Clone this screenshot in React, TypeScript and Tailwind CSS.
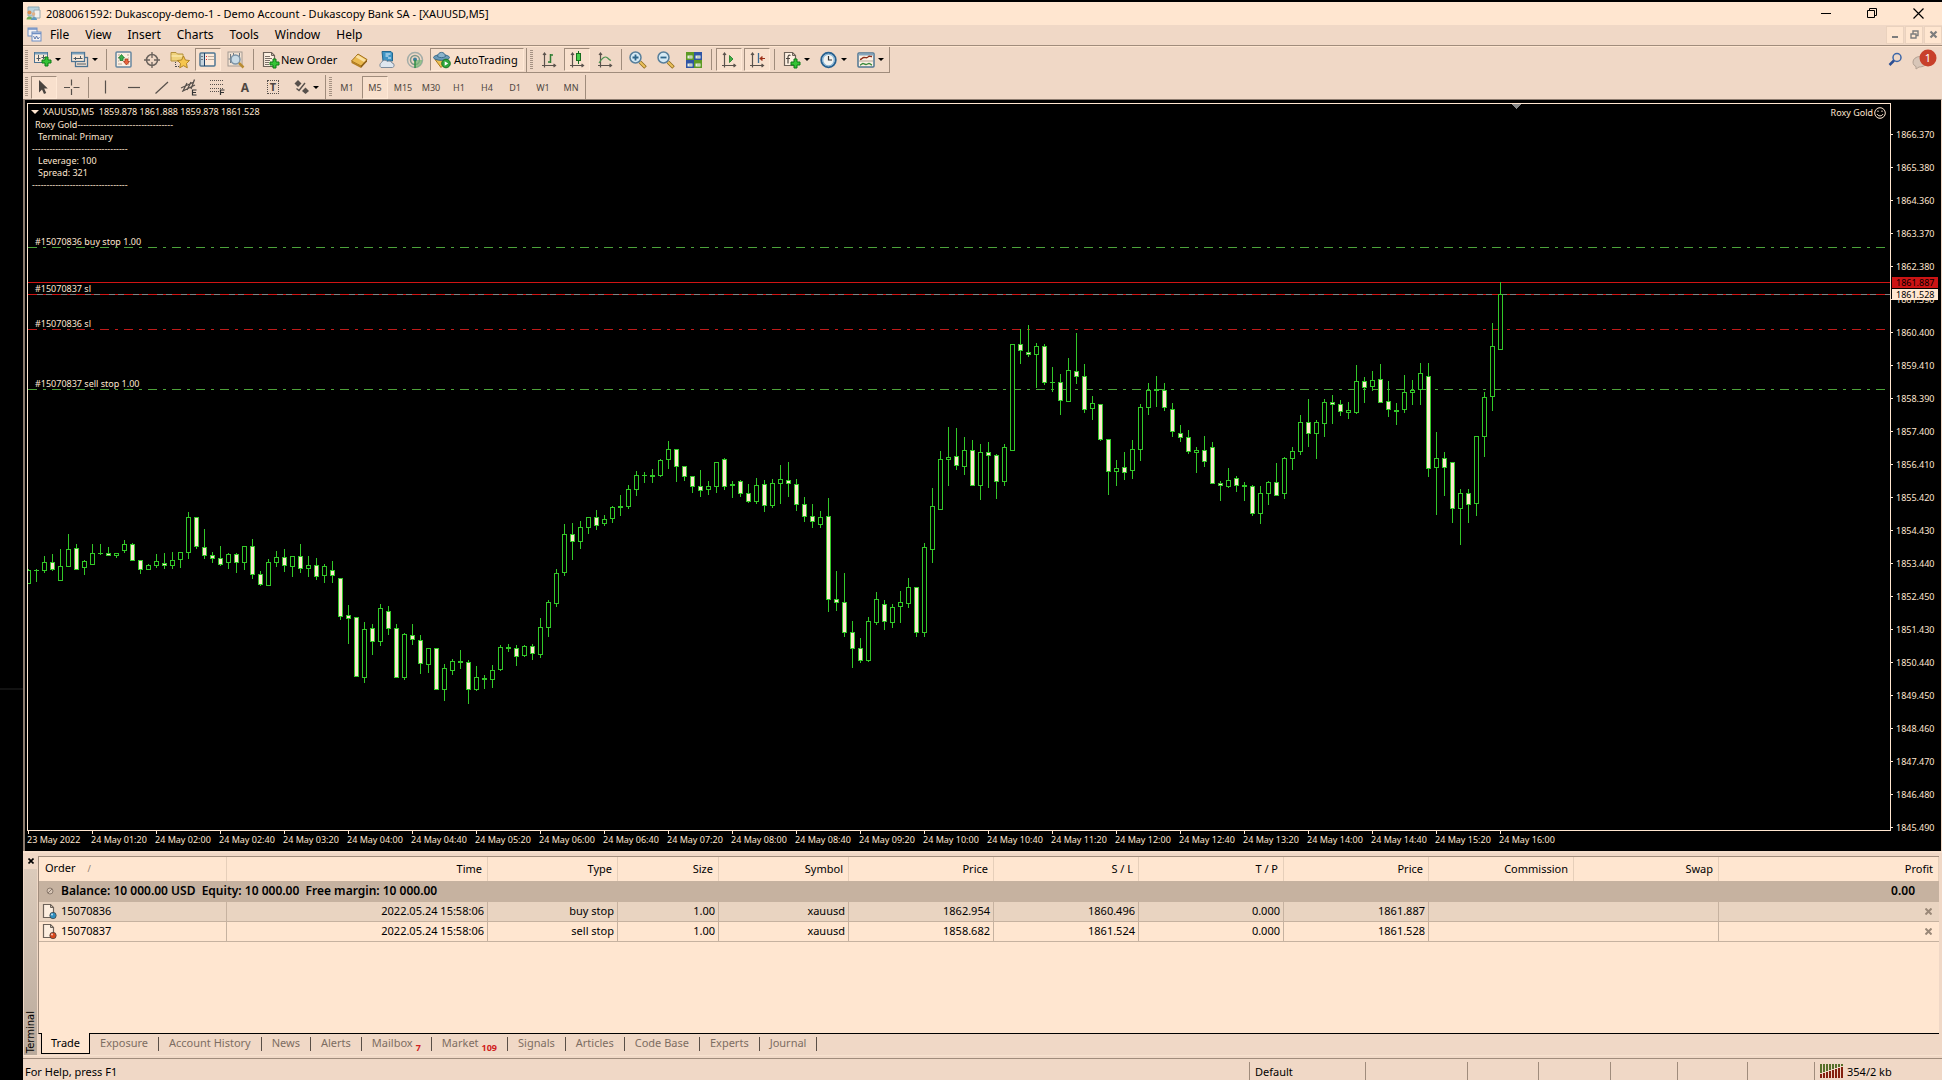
import React from "react";

function Svg({ children, size = 18 }: { children: React.ReactNode; size?: number }) {
  return (
    <svg width={size} height={size} viewBox={`0 0 ${size} ${size}`} fill="none" className="shrink-0" aria-hidden="true">
      {children}
    </svg>
  );
}

function Plus({ x, y }: { x: number; y: number }) {
  return <path d={`M${x + 3} ${y}h3v3h3v3h-3v3h-3v-3h-3v-3h3z`} fill="#35c435" stroke="#0d7a17" />;
}

const NewChartIcon = () => (
  <Svg>
    <rect x="0.5" y="1.5" width="13" height="10" fill="#fbe9d8" stroke="#4d7391" />
    <path d="M1 2.5h12" stroke="#7ba0bb" strokeWidth="2" />
    <path d="M4.500 4v6M2.500 7.500h4M9.500 4v4M7.500 6.500h4" stroke="#4c5a64" />
    <Plus x={8} y={6} />
  </Svg>
);
const ProfilesIcon = () => (
  <Svg>
    <rect x="4.500" y="6.500" width="12" height="9" fill="#f8e4d3" stroke="#4d7391" strokeWidth="1.300" />
    <rect x="0.5" y="1.500" width="13" height="9" fill="#fbe9d8" stroke="#4d7391" strokeWidth="1.300" />
    <path d="M1 2.500h12" stroke="#7ba0bb" strokeWidth="2" />
    <path d="M2.500 7.500h9M4.500 6v3M9.500 5v3M6 13h9" stroke="#4c5a64" />
  </Svg>
);
const MarketWatchIcon = () => (
  <Svg>
    <rect x="1" y="1" width="15" height="15" rx="1" fill="#fdf0e2" stroke="#6787a0" strokeWidth="1.500" />
    <path d="M3 4h2M3 7h1M3 10h1M3 13h4M12 4h2M13 7h1M13 13h1" stroke="#b8a596" />
    <path d="M6.500 3.500l3 3.500h-1.500v2.500H5V7H3.500z" fill="#3cae4b" stroke="#1d7a2c" strokeWidth="0.8" />
    <path d="M11.500 14l3-3.500H13V8h-3v2.500H8.500z" fill="#e8643c" stroke="#a63a1c" strokeWidth="0.8" />
  </Svg>
);
const DataWindowIcon = () => (
  <Svg>
    <circle cx="9" cy="9" r="5.500" stroke="#6a625c" strokeWidth="1.500" />
    <path d="M9 1v6M9 11v6M1 9h6M11 9h6" stroke="#6a625c" strokeWidth="1.300" />
  </Svg>
);
const NavigatorIcon = () => (
  <Svg size={20}>
    <path d="M1 2.500h5l1.500 1.500H13v7H1z" fill="#f0d27c" stroke="#b3903c" />
    <path d="M1.500 6h11" stroke="#fff0bd" />
    <path d="M5.500 12v5M6 16.500h4" stroke="#4c4c4c" strokeDasharray="1 1" />
    <path d="M13.500 6l1.900 4 4.100.5-3 3 .8 4.300-3.800-2.100-3.800 2.100.8-4.300-3-3 4.100-.5z" fill="#f6c64f" stroke="#a97c1e" strokeWidth="0.9" />
  </Svg>
);
const TerminalIcon = () => (
  <Svg>
    <rect x="1" y="2" width="15" height="13" rx="1" fill="#fdeada" stroke="#4f7592" strokeWidth="1.500" />
    <path d="M2 3h3v11H2z" fill="#c4d3dd" />
    <path d="M5.500 2v13" stroke="#1d3f66" />
    <path d="M3 5v1M3 8v1" stroke="#222" />
    <path d="M7 5.500h1M7 8.500h1" stroke="#d23" />
    <path d="M9 5.500h6M9 8.500h6" stroke="#b9a99b" />
  </Svg>
);
const TesterIcon = () => (
  <Svg>
    <rect x="1" y="1" width="14" height="14" fill="#f3e2d2" stroke="#a49a92" />
    <path d="M3.500 3v9M1.500 8h3M6.500 2v5M12.500 2v4" stroke="#6f7880" />
    <circle cx="8.500" cy="8.500" r="4.500" fill="#c9dbe6" stroke="#7b93a6" strokeWidth="1.500" />
    <path d="M12 12l4.500 4.500" stroke="#b98c33" strokeWidth="2.500" />
  </Svg>
);
const NewOrderIcon = () => (
  <Svg>
    <path d="M1.500 1.500h8l3 3v11h-11z" fill="#fdf0e2" stroke="#6d6259" strokeWidth="1.200" />
    <path d="M9.500 1.500v3h3" stroke="#6d6259" />
    <path d="M3 5.500h5M3 7.500h7M3 9.500h5M3 11.500h4M3 13.500h4" stroke="#7a7068" />
    <Plus x={8} y={8} />
  </Svg>
);
const MetaEditorIcon = () => (
  <Svg>
    <path d="M1.500 10L8 3l9 5.500-6 6.500z" fill="#eab950" stroke="#a2701a" />
    <path d="M8 4l8 5-2 2-8.500-5z" fill="#fbe0a0" />
    <path d="M1.500 10l9.500 5v2l-9.500-5z" fill="#b57f22" />
    <path d="M11 15l6-6.500v2L11 17z" fill="#8c5d14" />
  </Svg>
);
const VpsIcon = () => (
  <Svg>
    <path d="M4 .500h9l1.500 1.500v8H5z" fill="#3f94c4" stroke="#24688f" />
    <path d="M7.500 3h5M7.500 5h3M10 7h3" stroke="#e8f6ff" strokeWidth="1.200" />
    <path d="M3 16.500a3 3 0 01.5-5 3.500 3.500 0 016-1 3 3 0 014.500 1.500 2.300 2.300 0 01.5 4.500z" fill="#dfe6ee" stroke="#7d8b9b" />
  </Svg>
);
const SignalIcon = () => (
  <Svg>
    <circle cx="9" cy="9" r="7.500" stroke="#a3ada8" strokeWidth="1.500" />
    <circle cx="9" cy="9" r="4.500" stroke="#7f988b" strokeWidth="1.500" />
    <path d="M9 9v8c4-.5 7-3.500 7.500-8z" fill="#74b775" opacity="0.7" />
    <circle cx="9" cy="8.500" r="2" fill="#3d7f9b" />
    <path d="M9 9v8" stroke="#2f8f45" strokeWidth="1.500" />
  </Svg>
);
const AutoTradingIcon = () => (
  <Svg>
    <path d="M2 8.500l6 8 7-7z" fill="#efc052" stroke="#a8791d" />
    <ellipse cx="8.500" cy="6.500" rx="8" ry="2.800" fill="#6c9bb8" stroke="#3d6d8c" />
    <path d="M4.500 5.500C5 0 12 0 12.500 5.500c-2 1.500-6 1.500-8 0z" fill="#8bb4cc" stroke="#3d6d8c" />
    <circle cx="13" cy="12.500" r="4.300" fill="#2fa63c" stroke="#177522" />
    <path d="M11.700 10.200l3.500 2.300-3.500 2.300z" fill="#fff" />
  </Svg>
);
function Axes() {
  return (
    <path d="M4.500 2v14.500M2 14.500h13.500M3 4l1.500-2L6 4M13.500 13l2 1.500-2 1.500" stroke="#5a524c" strokeWidth="1.200" />
  );
}
const BarChartIcon = () => (
  <Svg>
    <Axes />
    <path d="M10.500 3v9M10.500 4h2.500M8 11h2.500" stroke="#2e7d33" strokeWidth="1.500" />
  </Svg>
);
const CandleIcon = () => (
  <Svg>
    <Axes />
    <path d="M10.500 0v13" stroke="#176d1d" />
    <rect x="8.500" y="2.500" width="4" height="7" fill="#45cf4a" stroke="#176d1d" />
  </Svg>
);
const LineChartIcon = () => (
  <Svg>
    <Axes />
    <path d="M3 12c3-5 6-7 8-5.500 1.500 1 2 2.500 4 3" stroke="#4c9350" strokeWidth="1.200" />
  </Svg>
);
function Zoom({ plus }: { plus?: boolean }) {
  return (
    <Svg>
      <path d="M11 11l5.500 5.500" stroke="#8f6a1c" strokeWidth="3.500" />
      <path d="M11 11l5 5" stroke="#ebc15c" strokeWidth="2" />
      <circle cx="6.500" cy="6.500" r="5.500" fill="#d6eaf4" stroke="#587f9b" strokeWidth="1.500" />
      <path d={plus ? "M3.500 6.500h6M6.500 3.500v6" : "M3.500 6.500h6"} stroke="#2f678c" strokeWidth="1.800" />
    </Svg>
  );
}
const TileIcon = () => (
  <Svg>
    <path d="M1 1h8v8H1zM9 9h8v8H9z" fill="#5d9a25" />
    <path d="M9 1h8v8H9zM1 9h8v8H1z" fill="#2f55a4" />
    <path d="M2.500 4.500h5v3h-5zM10.500 4.500h5v3h-5zM2.500 12.500h5v3h-5zM10.500 12.500h5v3h-5z" fill="#e9f0e4" />
    <path d="M4 6h3M12 6h3M4 14h3M12 14h3" stroke="#9fb09a" />
  </Svg>
);
const AutoScrollIcon = () => (
  <Svg>
    <Axes />
    <path d="M9.500 4.500l3.500 3.500-3.500 3.500z" fill="#3fae45" stroke="#1c7a24" strokeWidth="0.8" />
  </Svg>
);
const ShiftIcon = () => (
  <Svg>
    <Axes />
    <path d="M10.500 2v10" stroke="#3b6c94" strokeWidth="1.300" />
    <path d="M12 7.500h5M14 5.500l-2 2 2 2z" stroke="#9c2f17" fill="#9c2f17" />
  </Svg>
);
const IndicatorsIcon = () => (
  <Svg>
    <path d="M1.500 1.500h8l3 3v10h-11z" fill="#fdf0e2" stroke="#6d6259" strokeWidth="1.200" />
    <path d="M9.500 1.500v3h3" stroke="#6d6259" />
    <path d="M7.500 4.500c-2-1-2.500.5-2.500 2v6M3 7.500h4" stroke="#4d4640" strokeWidth="1.200" />
    <Plus x={8} y={8} />
  </Svg>
);
const ClockIcon = () => (
  <Svg>
    <circle cx="8.500" cy="9" r="7.200" fill="#f3f3f0" stroke="#27608f" strokeWidth="2" />
    <circle cx="8.500" cy="9" r="5.800" stroke="#86b3d4" strokeWidth="1.300" />
    <path d="M8.500 5v4H12" stroke="#333" strokeWidth="1.200" />
  </Svg>
);
const TemplateIcon = () => (
  <Svg>
    <rect x="1" y="2" width="16" height="14" rx="1" fill="#fdf0e2" stroke="#4f7592" strokeWidth="1.500" />
    <path d="M1.500 3.500h15" stroke="#86a7be" strokeWidth="2" />
    <path d="M3 8.500c2 0 2-2 4-2s3 1 4-.5 2-.5 4-.5" stroke="#8c2f1b" strokeWidth="1.300" />
    <path d="M2 10h14" stroke="#b7a799" />
    <path d="M3 14c1 0 2-1.500 3-1.500s1.500 1 3 1 1.500-1 3-1 1 1 3 1.500" stroke="#3c8a3f" strokeWidth="1.300" />
  </Svg>
);

const CursorIcon = () => (
  <Svg>
    <path d="M4 2v12.500l3-3 2 4.500 2.200-1L9.200 10.500h3.600z" fill="#4a443f" />
  </Svg>
);
const CrosshairIcon = () => (
  <Svg>
    <path d="M8.500 1.500v6M8.500 11v6M1 9.500h6M10.500 9.500h6" stroke="#57504b" strokeWidth="1.200" />
  </Svg>
);
const VLineIcon = () => (
  <Svg>
    <path d="M9.500 2.500v13" stroke="#57504b" strokeWidth="1.200" />
  </Svg>
);
const HLineIcon = () => (
  <Svg>
    <path d="M4 9.500h12" stroke="#57504b" strokeWidth="1.200" />
  </Svg>
);
const TrendIcon = () => (
  <Svg>
    <path d="M3.500 15.500L16 4" stroke="#57504b" strokeWidth="1.200" />
  </Svg>
);
const ChannelIcon = () => (
  <Svg>
    <path d="M1 10L14 4M2 13.500L15 7M3 13L7 5M7 12l4-8M11 11l3.500-9.500" stroke="#57504b" strokeWidth="1.300" />
    <path d="M16.500 12h-4v5h4M12.500 14.500h3.500" stroke="#333" strokeWidth="1.200" />
  </Svg>
);
const FiboIcon = () => (
  <Svg>
    <path d="M2 2.500h14M2 6.500h14M2 10.500h14M2 13.500h9" stroke="#57504b" strokeDasharray="1 1" strokeWidth="1.200" />
    <path d="M16.500 12h-4v5M12.500 14.500h3.500" stroke="#333" strokeWidth="1.200" />
  </Svg>
);
const ArrowsIcon = () => (
  <Svg>
    <path d="M6 2l3.500 3.500L6 9 2.500 5.500z" fill="#57504b" />
    <path d="M13.500 9.500L17 13l-3.500 3L10 13z" fill="#57504b" />
    <path d="M4.500 10.500l2.500 2L13 5" stroke="#57504b" strokeWidth="1.400" />
  </Svg>
);
const AppIcon = () => (
  <Svg size={15}>
    <path d="M2 1h11v9H2z" fill="#b9d3dd" stroke="#8aa9b5" />
    <path d="M8 4h6v8H8z" fill="#f2f0ec" stroke="#9aa8ae" />
    <circle cx="3.500" cy="6.500" r="2" fill="#d98c4f" />
    <path d="M.5 13.500c0-4 6-4 6 0z" fill="#6fae52" />
    <circle cx="7.500" cy="8" r="1.800" fill="#e0b28a" />
    <path d="M5 14c0-4 6-4 6 0z" fill="#5d9ac0" />
  </Svg>
);
const MdiIcon = () => (
  <Svg size={15}>
    <rect x="1" y="1" width="9" height="8" fill="#f5f2f3" stroke="#6f8fc4" />
    <rect x="5" y="5" width="9" height="9" fill="#f5f2f3" stroke="#6f8fc4" />
    <path d="M1 2h9M5 6.500h9" stroke="#6f8fc4" strokeWidth="1.500" />
    <path d="M6.500 9l1.500 3 1.500-3 1.500 3 1.500-2" stroke="#4f6fa8" strokeWidth="0.9" />
  </Svg>
);

function Grip() {
  return <span className="h-5 w-[3px] shrink-0 bg-[repeating-linear-gradient(to_bottom,#a59283_0_1px,transparent_1px_2px)]" />;
}
function Sep({ tight }: { tight?: boolean }) {
  return <span className={tight ? "mx-[2px] h-[21px] w-px shrink-0 bg-[#a08c7c]" : "mx-[3px] h-[21px] w-px shrink-0 bg-[#a08c7c]"} />;
}
function Caret() {
  return <span className="h-0 w-0 border-x-[3px] border-t-[3px] border-x-transparent border-t-black" />;
}

function ToolButton({ label, pressed, children }: { label: string; pressed?: boolean; children: React.ReactNode }) {
  return (
    <span className="flex w-7 shrink-0 justify-center">
      <button
        type="button"
        aria-label={label}
        aria-pressed={pressed}
        className={
          pressed
            ? "flex h-[23px] w-[26px] items-center justify-center border border-t-[#a08c7c] border-r-[#ffe9d6] border-b-[#ffe9d6] border-l-[#a08c7c] bg-[#f8e0cd]"
            : "flex h-[23px] w-[26px] items-center justify-center"
        }
      >
        {children}
      </button>
    </span>
  );
}
function DropButton({ label, children }: { label: string; children: React.ReactNode }) {
  return (
    <button type="button" aria-label={label} className="flex h-[23px] w-[37px] shrink-0 items-center gap-[3px] pl-[5px]">
      {children}
      <Caret />
    </button>
  );
}

/* Candle rows: high, body top, body bottom, low (three units per pixel) and f = filled, h = hollow. */
const SEGMENTS: { base: number; rows: string }[] = [
  {
    base: 116,
    rows:
      "1047 1050 1092 1092 h,1047 1050 1053 1086 h,1008 1026 1053 1059 h,1002 1026 1050 1053 f,987 1038 1083 1083 h,942 987 1041 1041 h,972 984 1050 1050 f,1020 1023 1044 1065 h,972 999 1035 1035 h,972 999 1002 1005 h,981 999 1008 1008 f,999 999 1008 1014 h,960 972 993 999 h,969 972 1023 1023 f,1020 1020 1050 1062 f,1032 1035 1050 1050 h,1002 1023 1038 1044 h,999 1029 1038 1047 f,996 1020 1038 1047 h,996 996 1020 1044 h,876 891 999 1017 h,891 891 981 987 f,927 981 1008 1017 f,996 1005 1017 1029 f,978 1014 1035 1038 f,999 1002 1029 1047 h,999 1002 1029 1059 f,978 978 1029 1050 h,957 978 1065 1077 f,1053 1062 1095 1098 f,1017 1026 1098 1098 h,993 1011 1029 1041 h,987 1011 1038 1056 f,1008 1008 1041 1071 h,972 1008 1047 1059 f,1008 1035 1047 1071 h,1014 1035 1071 1080 f,1032 1038 1068 1089 h,1023 1050 1068 1089 f,1074 1074 1191 1200 f,1155 1185 1197 1272 f,1191 1191 1371 1371 f,1206 1227 1374 1389 h,1212 1224 1266 1305 f,1152 1164 1266 1278 h,1158 1173 1227 1245 f,1212 1224 1374 1374 f,1239 1242 1374 1380 h,1212 1245 1260 1275 f,1245 1260 1332 1362 f,1284 1284 1335 1359 h,1284 1284 1410 1410 f,1332 1344 1410 1443 h,1317 1323 1353 1365 h,1290 1323 1329 1347 h,1320 1326 1410 1452 f,1338 1371 1410 1413 h,1365 1374 1380 1407 h,1335 1350 1380 1404 h",
  },
  {
    base: 296,
    rows:
      "735 741 810 813 h,732 741 747 756 h,735 744 771 798 f,735 738 768 771 h,732 738 762 780 f,654 681 765 774 h,600 606 684 711 h,507 519 612 621 h,372 402 519 528 h,369 402 426 480 f,363 381 426 447 h,351 351 384 402 h,330 351 378 390 f,345 357 372 378 h,318 321 357 369 h,285 318 324 348 h,255 267 321 327 h,213 225 270 288 h,216 225 228 249 h,207 225 231 249 h,177 180 228 231 h,123 147 180 207 h,147 147 201 246 f,198 198 231 243 f,228 228 261 279 f,210 258 273 291 f,243 258 270 285 h,186 186 261 279 h,174 177 261 270 f,243 252 258 294 h,240 243 282 291 f,252 279 306 309 f,234 255 306 312 h,240 252 318 336 f,237 249 318 324 h,195 237 252 312 h,186 240 252 291 f,237 252 315 333 f,291 312 351 366 f,312 348 366 384 f,333 351 375 384 h,294 348 600 636 f,513 597 609 633 f,519 606 699 711 f,663 696 747 804 f,714 744 783 789 f,651 663 783 786 h,576 597 669 675 h,600 612 666 690 f,612 621 669 684 h,573 606 621 669 h,534 561 612 624 h,561 561 699 711 f,429 441 699 711 h,264 318 450 489 h,153 177 330 330 h,81 171 180 258 h,84 168 198 210 f",
  },
  {
    base: 186,
    rows:
      "441 480 531 555 h,450 480 588 588 f,462 486 588 630 h,456 486 498 594 f,492 495 576 627 f,462 471 576 588 h,162 162 483 483 h,117 162 183 222 f,105 186 195 201 f,159 168 195 294 h,162 168 279 285 f,231 276 279 306 h,252 276 333 375 f,204 240 336 336 h,129 243 261 282 f,222 258 360 369 f,318 339 357 390 h,342 342 450 453 f,447 447 546 615 f,510 534 546 588 h,486 531 549 570 f,450 477 543 567 h,342 351 480 513 h,279 300 354 375 h,258 297 303 351 h,279 300 354 363 f,339 357 426 441 f,405 429 444 456 f,420 441 486 492 f,471 480 489 549 h,438 480 516 531 f,456 471 582 582 f,573 579 588 633 f",
  },
  {
    base: 156,
    rows:
      "624 660 681 684 h,648 654 678 696 f,666 675 681 723 h,675 678 762 768 f,678 699 762 792 h,663 666 702 735 h,609 666 708 708 f,591 594 702 717 h,561 573 597 630 h,465 486 576 585 h,417 486 522 561 f,480 486 522 597 h,417 426 492 531 h,405 426 435 492 f,420 432 456 468 f,426 450 459 477 h,315 363 459 462 h,351 363 384 429 f,333 360 381 393 h,312 357 429 429 f,363 423 450 471 f,429 450 456 495 h,345 396 450 459 h,360 390 399 435 h,309 339 390 435 h,309 348 627 651 f,516 594 624 765 h,576 594 624 708 f,606 606 747 789 f,687 699 747 855 h,687 699 735 789 f,528 528 732 768 h,396 411 531 591 h,189 258 411 453 h,66 102 270 270 h",
  },
];

const CANDLES = SEGMENTS.flatMap(({ base, rows }) =>
  rows.split(",").map((row) => {
    const [high, top, bottom, low, kind] = row.split(" ");
    const y = (v: string) => base + Math.round(Number(v) / 3);
    return { high: y(high), top: y(top), bottom: y(bottom), low: y(low), filled: kind === "f" };
  }),
);

const ORDER_LINES = [
  { y: 143, color: "#4ca33a", label: "#15070836 buy stop 1.00" },
  { y: 190, color: "#d01414", label: "#15070837 sl" },
  { y: 225, color: "#c01a1a", label: "#15070836 sl" },
  { y: 285, color: "#4ca33a", label: "#15070837 sell stop 1.00" },
];

const PRICES = [
  "1866.370", "1865.380", "1864.360", "1863.370", "1862.380", "1861.390", "1860.400", "1859.410", "1858.390", "1857.400", "1856.410",
  "1855.420", "1854.430", "1853.440", "1852.450", "1851.430", "1850.440", "1849.450", "1848.460", "1847.470", "1846.480", "1845.490",
];
const TIMES = [
  "23 May 2022", "24 May 01:20", "24 May 02:00", "24 May 02:40", "24 May 03:20", "24 May 04:00", "24 May 04:40", "24 May 05:20",
  "24 May 06:00", "24 May 06:40", "24 May 07:20", "24 May 08:00", "24 May 08:40", "24 May 09:20", "24 May 10:00", "24 May 10:40",
  "24 May 11:20", "24 May 12:00", "24 May 12:40", "24 May 13:20", "24 May 14:00", "24 May 14:40", "24 May 15:20", "24 May 16:00",
];

function Plot() {
  return (
    <svg className="block h-full w-full" shapeRendering="crispEdges" role="img" aria-label="XAUUSD M5 candlestick chart">
      <line x1="0" x2="100%" y1="178.5" y2="178.5" stroke="#d01414" />
      <line x1="0" x2="100%" y1="190.5" y2="190.5" stroke="#808080" />
      {ORDER_LINES.map((l) => (
        <line key={l.label} x1="0" x2="100%" y1={l.y + 0.5} y2={l.y + 0.5} stroke={l.color} strokeDasharray="9 6 3 6" />
      ))}
      {CANDLES.map((c, i) => (
        <g key={i} fill="#32c828">
          <rect x={i * 8} y={c.high} width="1" height={c.low - c.high} />
          <rect x={i * 8 - 2} y={c.top} width="5" height={c.bottom - c.top} />
          {c.bottom - c.top > 2 && (
            <rect x={i * 8 - 1} y={c.top + 1} width="3" height={c.bottom - c.top - 2} fill={c.filled ? "#ffe6d0" : "#000"} />
          )}
        </g>
      ))}
      <path d="M1484 0h9l-4.500 5z" fill="#888" />
    </svg>
  );
}

const DASHES = "-".repeat(33);

function Chart() {
  return (
    <section className="flex min-h-0 flex-1 border-t border-r border-l-2 border-t-[#8c7b6e] border-r-[#f0d8c6] border-l-[#8c7b6e] bg-black text-[9px] leading-3 text-[#ffe6d0]">
      <div className="flex min-w-0 flex-1 flex-col pt-[3px] pl-[2px]">
        <div className="relative min-h-0 flex-1 border border-[#ffe6d0]">
          <div className="absolute inset-0 overflow-hidden">
            <Plot />
          </div>
          <div className="absolute top-[2px] left-[3px] flex items-center gap-1 whitespace-pre">
            <span className="h-0 w-0 border-x-4 border-t-4 border-x-transparent border-t-[#ffe6d0]" />
            <span>XAUUSD,M5  1859.878 1861.888 1859.878 1861.528</span>
          </div>
          <div className="absolute top-[15px] left-1 whitespace-pre">
            <p className="pl-[3px]">Roxy Gold{DASHES}</p>
            <p className="pl-[6px]">Terminal: Primary</p>
            <p>{DASHES}</p>
            <p className="pl-[6px]">Leverage: 100</p>
            <p className="pl-[6px]">Spread: 321</p>
            <p>{DASHES}</p>
          </div>
          <div className="absolute top-[3px] right-1 flex items-center gap-px">
            <span>Roxy Gold</span>
            <svg width="12" height="12" viewBox="0 0 12 12" fill="none" stroke="#ffe6d0" aria-hidden="true">
              <circle cx="6" cy="6" r="5.300" />
              <path d="M4 3.500v1.500M8 3.500v1.500M3 7c1 2.500 5 2.500 6 0" />
            </svg>
          </div>
          {ORDER_LINES.map((l) => (
            <span key={l.label} className="absolute left-[7px]" style={{ top: l.y - 11 }}>
              {l.label}
            </span>
          ))}
        </div>
        <div className="flex h-5 shrink-0 overflow-hidden">
          {TIMES.map((t) => (
            <span key={t} className="w-16 shrink-0 whitespace-nowrap">
              <span className="ml-px block h-[3px] w-px bg-[#ffe6d0]" />
              {t}
            </span>
          ))}
        </div>
      </div>
      <div className="relative w-[50px] shrink-0 overflow-hidden">
        <ul className="pt-[18px]">
          {PRICES.map((p) => (
            <li key={p} className="flex h-[33px] items-center gap-[3px]">
              <span className="h-px w-[2px] bg-[#ffe6d0]" />
              {p}
            </li>
          ))}
        </ul>
        <span className="absolute top-[177px] left-px h-[11px] w-[46px] bg-[#cc1414] pl-1 leading-[11px] text-black">1861.887</span>
        <span className="absolute top-[189px] left-px h-[11px] w-[46px] bg-[#ffe6d0] pl-1 leading-[11px] text-black">1861.528</span>
      </div>
    </section>
  );
}

function DocIcon({ color }: { color: string }) {
  return (
    <svg width="16" height="17" viewBox="0 0 16 17" fill="none" aria-hidden="true">
      <path d="M1.500 1.500h7l3 3v10h-10z" fill="#fdeedf" stroke="#6d6259" strokeWidth="1.200" />
      <path d="M8.500 1.500v3h3" stroke="#6d6259" />
      <circle cx="11" cy="12.500" r="3.200" fill={color} stroke="#3c3c3c" strokeWidth="0.7" />
      <circle cx="10" cy="11.500" r="1" fill="#fff" opacity="0.7" />
    </svg>
  );
}

const COLUMNS = ["Order", "Time", "Type", "Size", "Symbol", "Price", "S / L", "T / P", "Price", "Commission", "Swap", "Profit"];
const ORDERS = [
  { color: "#2f8fc0", row: "bg-[#e9d4c1]", cells: ["15070836", "2022.05.24 15:58:06", "buy stop", "1.00", "xauusd", "1862.954", "1860.496", "0.000", "1861.887"] },
  { color: "#d9481c", row: "bg-[#ffe6d0]", cells: ["15070837", "2022.05.24 15:58:06", "sell stop", "1.00", "xauusd", "1858.682", "1861.524", "0.000", "1861.528"] },
];
const TABS: { name: string; badge?: string }[] = [
  { name: "Exposure" }, { name: "Account History" }, { name: "News" }, { name: "Alerts" }, { name: "Mailbox", badge: "7" }, { name: "Market", badge: "109" },
  { name: "Signals" }, { name: "Articles" }, { name: "Code Base" }, { name: "Experts" }, { name: "Journal" },
];

function Terminal() {
  return (
    <section className="flex shrink-0 border-t-2 border-[#f6dfcc] bg-[#f0d8c6] pt-[3px] pr-[3px]">
      <div className="flex w-[15px] shrink-0 flex-col items-center pt-px">
        <button type="button" aria-label="Close" className="mb-1 flex h-2 w-full items-center justify-center">
          <svg width="6" height="6" viewBox="0 0 6 6" stroke="#000" strokeWidth="1.600" aria-hidden="true">
            <path d="M.5.5l5 5M5.500.5l-5 5" />
          </svg>
        </button>
        <div className="flex w-[13px] flex-1 items-start justify-end bg-linear-to-b from-[#dccbbb] to-[#b9a99b] text-[10px] leading-[13px] [writing-mode:vertical-rl]">
          <span className="rotate-180 pt-[2px] font-['DejaVu_Sans']">Terminal</span>
        </div>
      </div>
      <div className="flex min-w-0 flex-1 flex-col">
        <div className="min-h-[178px] border-t border-l border-b border-t-[#a08c7c] border-l-[#a08c7c] border-b-black bg-[#ffe6d0]">
          <table className="w-full table-fixed border-separate border-spacing-0">
            <colgroup>
              <col className="w-[188px]" />
              <col className="w-[261px]" />
              <col className="w-[130px]" />
              <col className="w-[101px]" />
              <col className="w-[130px]" />
              <col className="w-[145px]" />
              <col className="w-[145px]" />
              <col className="w-[145px]" />
              <col className="w-[145px]" />
              <col className="w-[145px]" />
              <col className="w-[145px]" />
              <col />
            </colgroup>
            <thead>
              <tr className="h-6">
                {COLUMNS.map((c, i) =>
                  i === 0 ? (
                    <th key={i} scope="col" className="border-r border-[#e6cfba] pt-0 pr-0 pb-[2px] pl-[6px] text-left font-normal">
                      Order<span className="ml-3 text-[9px] text-[#8c7b6e]">/</span>
                    </th>
                  ) : (
                    <th key={i} scope="col" className="border-r border-[#e6cfba] pt-0 pr-[5px] pb-[2px] pl-0 text-right font-normal">
                      {c}
                    </th>
                  ),
                )}
              </tr>
            </thead>
            <tbody>
              <tr className="h-[21px] bg-[#c6b2a0] text-[12px] font-semibold">
                <td colSpan={11} className="px-0 pt-0 pb-[2px]">
                  <div className="flex items-center whitespace-pre pl-[7px]">
                    <svg width="8" height="8" viewBox="0 0 8 8" fill="none" stroke="#8c7b6e" className="mr-[7px]" aria-hidden="true">
                      <circle cx="4" cy="4" r="3" fill="#d8c6b6" />
                      <path d="M2 6l4-4" />
                    </svg>
                    Balance: 10 000.00 USD  Equity: 10 000.00  Free margin: 10 000.00
                  </div>
                </td>
                <td className="pt-0 pr-6 pb-[2px] pl-0 text-right">0.00</td>
              </tr>
              {ORDERS.map((o) => (
                <tr key={o.cells[0]} className={`h-5 ${o.row}`}>
                  {o.cells.map((c, i) =>
                    i === 0 ? (
                      <td key={i} className="border-r border-b border-[#c6b2a0] p-0">
                        <div className="flex items-center gap-[3px] pl-[3px]">
                          <DocIcon color={o.color} />
                          <span className="pb-[2px]">{c}</span>
                        </div>
                      </td>
                    ) : (
                      <td key={i} className="border-r border-b border-[#c6b2a0] pt-0 pr-[3px] pb-[2px] pl-0 text-right">
                        {c}
                      </td>
                    ),
                  )}
                  <td colSpan={2} className="border-r border-b border-[#c6b2a0] p-0" />
                  <td className="border-b border-[#c6b2a0] py-0 pr-[7px] pl-0">
                    <button type="button" aria-label="Delete order" className="ml-auto block">
                      <svg width="7" height="7" viewBox="0 0 7 7" stroke="#9a8878" strokeWidth="2" aria-hidden="true">
                        <path d="M.5.5l6 6M6.500.5l-6 6" />
                      </svg>
                    </button>
                  </td>
                </tr>
              ))}
            </tbody>
          </table>
        </div>
        <div role="tablist" className="flex h-[21px] items-start pl-[3px] text-[#7d6d62]">
          <button
            type="button"
            role="tab"
            aria-selected="true"
            className="relative -mt-px h-[21px] border-r border-b border-l border-black bg-[#ffe6d0] px-[9px] pb-px text-black"
          >
            Trade
          </button>
          {TABS.map((t) => (
            <button key={t.name} type="button" role="tab" aria-selected="false" className="flex h-[18px] items-center">
              <span className="px-[10px] pb-px">
                {t.name}
                {t.badge && <sub className="bottom-[-4px] ml-[3px] text-[9px] leading-none font-bold text-[#d02020]">{t.badge}</sub>}
              </span>
              <span className="mt-px h-[14px] w-px bg-[#5a4f47]" />
            </button>
          ))}
        </div>
      </div>
    </section>
  );
}

function StatusBar() {
  const cell = "flex h-full shrink-0 items-center border-l border-[#a08c7c] pl-[5px]";
  return (
    <footer className="shrink-0 border-t border-[#f8e2cf] bg-[#f0d8c6] pt-[2px]">
      <div className="flex h-[22px] items-end border-t border-[#a08c7c]">
        <div className="flex h-[18px] min-w-0 flex-1 items-center pl-[2px]">For Help, press F1</div>
        <div className="flex h-[18px]">
          <div className={`${cell} w-[116px]`}>Default</div>
          <div className={`${cell} w-[102px]`} />
          <div className={`${cell} w-[71px]`} />
          <div className={`${cell} w-[72px]`} />
          <div className={`${cell} w-[67px]`} />
          <div className={`${cell} w-[70px]`} />
          <div className={`${cell} w-[67px]`} />
          <div className={`${cell} w-[128px] gap-1`}>
            <svg width="23" height="14" viewBox="0 0 23 14" shapeRendering="crispEdges" aria-hidden="true">
              {[0, 1, 2, 3, 4, 5, 6, 7].map((i) => (
                <g key={i}>
                  <rect x={i * 3} y="0" width="2" height={9 - i} fill="#56702a" />
                  <rect x={i * 3} y={10 - i} width="2" height={4 + i} fill="#85200f" />
                </g>
              ))}
            </svg>
            354/2 kb
          </div>
        </div>
      </div>
    </footer>
  );
}

function TitleBar() {
  const btn = "flex h-full w-[46px] items-center justify-center";
  return (
    <header className="flex h-[23px] shrink-0 items-center bg-[#ffe6d0] pr-px pb-px pl-[3px]">
      <AppIcon />
      <h1 className="ml-[5px] flex-1 whitespace-nowrap">2080061592: Dukascopy-demo-1 - Demo Account - Dukascopy Bank SA - [XAUUSD,M5]</h1>
      <button type="button" aria-label="Minimize" className={btn}>
        <Svg size={11}><path d="M0 5.500h10" stroke="#000" /></Svg>
      </button>
      <button type="button" aria-label="Restore" className={btn}>
        <Svg size={11}><path d="M.5 2.500h7v7h-7zM2.500 2.500v-2h7v7h-2" stroke="#000" /></Svg>
      </button>
      <button type="button" aria-label="Close" className={btn}>
        <Svg size={11}><path d="M.5.5l10 10M10.500.5l-10 10" stroke="#000" strokeWidth="1.200" /></Svg>
      </button>
    </header>
  );
}

function MenuBar() {
  const mdi = "flex h-[18px] w-[18px] items-center justify-center border border-[#ead2be] bg-[#ffe6d0]";
  return (
    <nav className="flex h-5 shrink-0 items-center bg-[#f0d8c6] pb-px pl-[4px]">
      <MdiIcon />
      <ul className="flex flex-1 text-[12px]">
        {["File", "View", "Insert", "Charts", "Tools", "Window", "Help"].map((m) => (
          <li key={m}>
            <button type="button" className="px-2">{m}</button>
          </li>
        ))}
      </ul>
      <div className="flex gap-px">
        <button type="button" aria-label="Minimize chart" className={mdi}>
          <Svg size={9}><path d="M1 7h6" stroke="#7d7d7d" strokeWidth="2" /></Svg>
        </button>
        <button type="button" aria-label="Restore chart" className={mdi}>
          <Svg size={9}><path d="M1 4h5v4H1zM3 3.500V1h5v4.500H6.500" stroke="#7d7d7d" strokeWidth="1.400" /></Svg>
        </button>
        <button type="button" aria-label="Close chart" className={mdi}>
          <Svg size={9}><path d="M1.500 1.500l6 6M7.500 1.500l-6 6" stroke="#7d7d7d" strokeWidth="2.200" /></Svg>
        </button>
      </div>
    </nav>
  );
}

function Toolbars() {
  return (
    <div className="shrink-0 border-t border-[#a08c7c] bg-[#f0d8c6]">
      <div className="flex border-t border-[#ffe6d0]">
        <div className="flex h-[26px] items-center border-r border-b border-[#a08c7c] pl-[2px]">
          <Grip />
          <span className="w-px" />
          <DropButton label="New chart"><NewChartIcon /></DropButton>
          <DropButton label="Profiles"><ProfilesIcon /></DropButton>
          <Sep />
          <ToolButton label="Market Watch"><MarketWatchIcon /></ToolButton>
          <ToolButton label="Data Window"><DataWindowIcon /></ToolButton>
          <ToolButton label="Navigator"><NavigatorIcon /></ToolButton>
          <ToolButton label="Terminal" pressed><TerminalIcon /></ToolButton>
          <ToolButton label="Strategy Tester"><TesterIcon /></ToolButton>
          <Sep />
          <button type="button" className="flex h-[23px] w-[88px] items-center gap-px whitespace-nowrap pl-[5px]">
            <NewOrderIcon />
            New Order
          </button>
          <ToolButton label="MetaEditor"><MetaEditorIcon /></ToolButton>
          <ToolButton label="VPS"><VpsIcon /></ToolButton>
          <ToolButton label="Signals"><SignalIcon /></ToolButton>
          <button
            type="button"
            aria-pressed="true"
            className="ml-px flex h-[23px] w-[94px] items-center gap-[3px] whitespace-nowrap border border-t-[#a08c7c] border-r-[#ffe9d6] border-b-[#ffe9d6] border-l-[#a08c7c] bg-[#f8e0cd] pl-[2px]"
          >
            <AutoTradingIcon />
            AutoTrading
          </button>
          <span className="mr-[3px] ml-[2px] h-6 w-px bg-[#a08c7c]" />
          <Grip />
          <span className="w-[2px]" />
          <ToolButton label="Bar Chart"><BarChartIcon /></ToolButton>
          <ToolButton label="Candlesticks" pressed><CandleIcon /></ToolButton>
          <ToolButton label="Line Chart"><LineChartIcon /></ToolButton>
          <Sep tight />
          <ToolButton label="Zoom In"><Zoom plus /></ToolButton>
          <ToolButton label="Zoom Out"><Zoom /></ToolButton>
          <ToolButton label="Tile Windows"><TileIcon /></ToolButton>
          <Sep />
          <ToolButton label="Auto Scroll" pressed><AutoScrollIcon /></ToolButton>
          <ToolButton label="Chart Shift" pressed><ShiftIcon /></ToolButton>
          <Sep />
          <DropButton label="Indicators"><IndicatorsIcon /></DropButton>
          <DropButton label="Periods"><ClockIcon /></DropButton>
          <DropButton label="Templates"><TemplateIcon /></DropButton>
        </div>
        <div className="ml-auto flex h-[26px] items-center gap-[6px] pr-1">
          <button type="button" aria-label="Search">
            <Svg size={16}>
              <circle cx="9" cy="5.500" r="4" stroke="#3b66a8" strokeWidth="1.500" />
              <path d="M6 8.500L1.500 13" stroke="#2c4f94" strokeWidth="2.500" />
            </Svg>
          </button>
          <button type="button" aria-label="Notifications" className="relative h-6 w-7">
            <svg width="28" height="24" viewBox="0 0 28 24" aria-hidden="true">
              <path d="M3 14a7 5.500 0 1114 0c0 3-4 5-8 5l-3 2v-2.500C4.500 18 3 16.500 3 14z" fill="#d8c6b8" stroke="#b3a193" />
              <circle cx="18" cy="10" r="8.500" fill="#c8402a" />
            </svg>
            <span className="absolute top-0 left-[10px] w-4 text-center leading-5 text-white">1</span>
          </button>
        </div>
      </div>
      <div className="flex h-[26px] items-center pt-[2px] pl-[2px] text-[#4f4741]">
        <Grip />
        <span className="w-[2px]" />
        <ToolButton label="Cursor" pressed><CursorIcon /></ToolButton>
        <ToolButton label="Crosshair"><CrosshairIcon /></ToolButton>
        <Sep tight />
        <ToolButton label="Vertical Line"><VLineIcon /></ToolButton>
        <ToolButton label="Horizontal Line"><HLineIcon /></ToolButton>
        <ToolButton label="Trendline"><TrendIcon /></ToolButton>
        <ToolButton label="Equidistant Channel"><ChannelIcon /></ToolButton>
        <ToolButton label="Fibonacci Retracement"><FiboIcon /></ToolButton>
        <ToolButton label="Text"><span className="text-[12px] font-bold">A</span></ToolButton>
        <ToolButton label="Text Label">
          <span className="flex h-[14px] w-3 items-center justify-center border border-dotted border-[#57504b] text-[11px] leading-3 font-bold">T</span>
        </ToolButton>
        <DropButton label="Arrows"><ArrowsIcon /></DropButton>
        <span className="mr-[3px] ml-px h-6 w-px bg-[#a08c7c]" />
        <Grip />
        <span className="w-px" />
        {["M1", "M5", "M15", "M30", "H1", "H4", "D1", "W1", "MN"].map((p) => (
          <ToolButton key={p} label={p} pressed={p === "M5"}>
            <span className="text-[9px]">{p}</span>
          </ToolButton>
        ))}
        <span className="h-6 w-px bg-[#a08c7c]" />
      </div>
    </div>
  );
}

export default function App() {
  return (
    <div className="flex h-screen bg-black pt-[2px] font-['Noto_Sans','Open_Sans',sans-serif] text-[11px] leading-[15px] text-black">
      <div className="flex w-[23px] shrink-0 flex-col justify-end pb-[390px]">
        <span className="h-[2px] bg-[#121212]" />
      </div>
      <div className="flex min-w-0 flex-1 flex-col">
        <TitleBar />
        <MenuBar />
        <Toolbars />
        <Chart />
        <Terminal />
        <StatusBar />
      </div>
    </div>
  );
}
